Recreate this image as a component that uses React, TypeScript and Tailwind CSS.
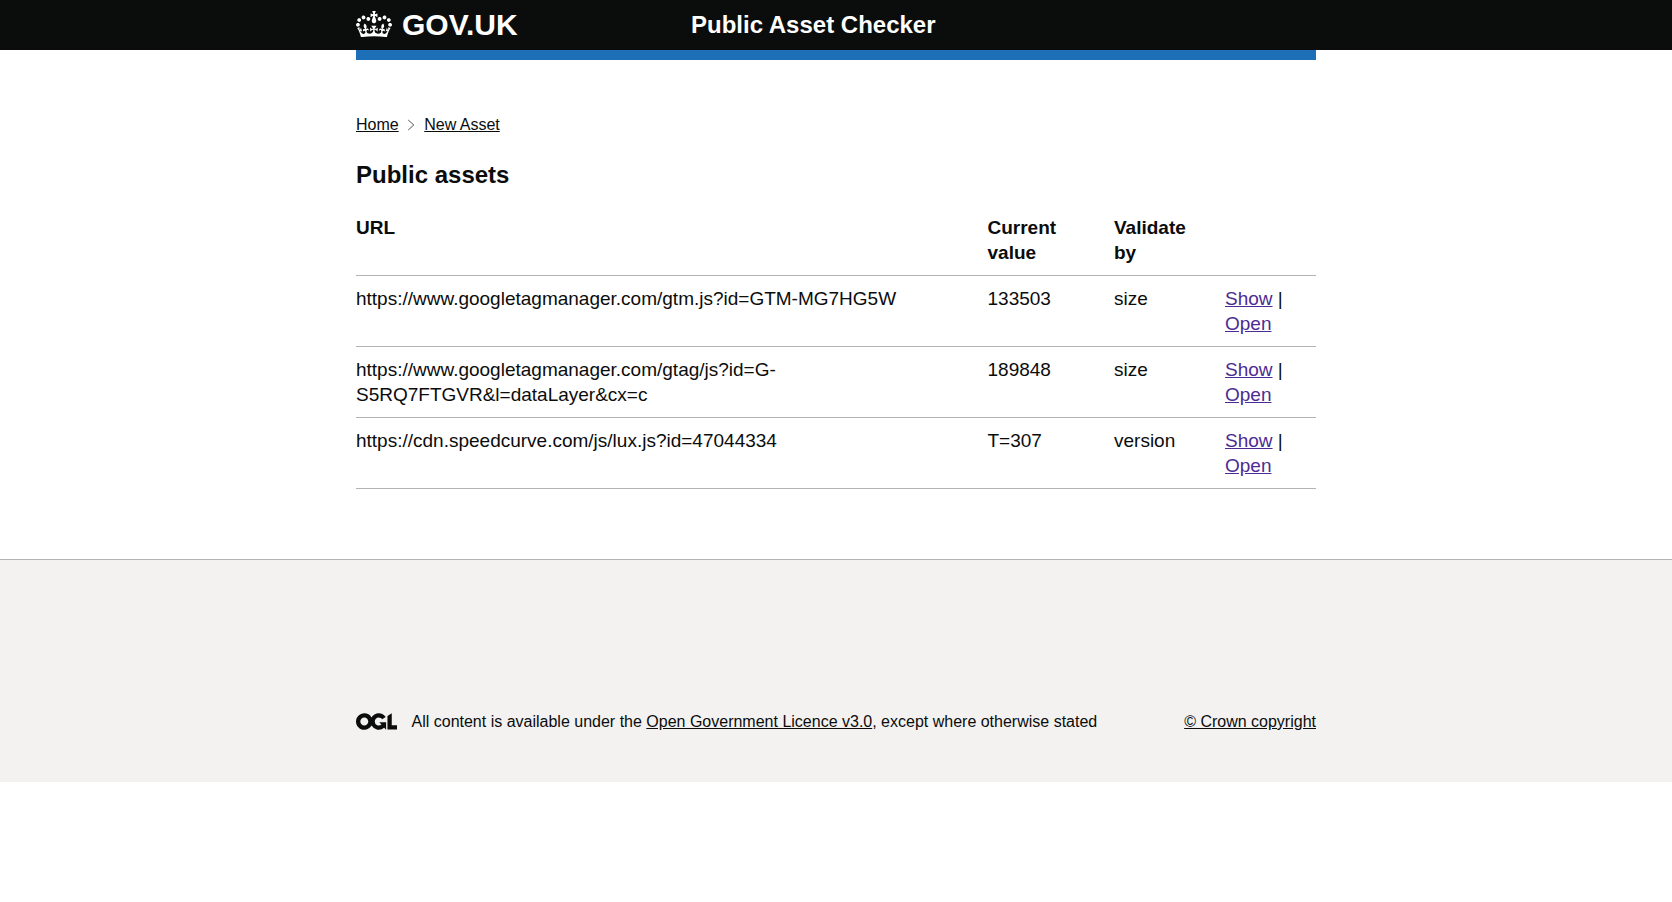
const font = "font-['Liberation_Sans',Arial,sans-serif]";

const rows = [
  { url: "https://www.googletagmanager.com/gtm.js?id=GTM-MG7HG5W", value: "133503", by: "size" },
  { url: "https://www.googletagmanager.com/gtag/js?id=G-S5RQ7FTGVR&l=dataLayer&cx=c", value: "189848", by: "size" },
  { url: "https://cdn.speedcurve.com/js/lux.js?id=47044334", value: "T=307", by: "version" },
];

function Crown() {
  return (
    <svg viewBox="0 0 132 97" className="w-[36px] h-[26.5px] fill-white shrink-0 -mt-[2px]">
      <path d="M25 30.2c3.5 1.5 7.7-.2 9.1-3.7 1.5-3.6-.2-7.8-3.9-9.2-3.6-1.4-7.6.3-9.1 3.9-1.4 3.5.3 7.5 3.9 9zM9 39.5c3.6 1.5 7.8-.2 9.2-3.7 1.5-3.6-.2-7.8-3.9-9.1-3.6-1.5-7.6.2-9.1 3.8-1.4 3.5.3 7.5 3.8 9zM4.4 57.2c3.5 1.5 7.7-.2 9.1-3.8 1.5-3.6-.2-7.7-3.9-9.1-3.6-1.5-7.6.2-9.1 3.8-1.4 3.5.3 7.6 3.9 9.1zm38.3-21.4c3.5 1.5 7.7-.2 9.1-3.8 1.5-3.6-.2-7.7-3.9-9.1-3.6-1.5-7.6.2-9.1 3.8-1.3 3.6.4 7.7 3.9 9.1zm64.4-5.6c-3.6 1.5-7.8-.2-9.1-3.7-1.5-3.6.2-7.8 3.8-9.2 3.6-1.4 7.7.3 9.2 3.9 1.3 3.5-.4 7.5-3.9 9zm15.9 9.3c-3.6 1.5-7.7-.2-9.1-3.7-1.5-3.6.2-7.8 3.7-9.1 3.6-1.5 7.7.2 9.2 3.8 1.5 3.5-.3 7.5-3.8 9zm4.7 17.7c-3.6 1.5-7.8-.2-9.2-3.8-1.5-3.6.2-7.7 3.9-9.1 3.6-1.5 7.7.2 9.2 3.8 1.3 3.5-.4 7.6-3.9 9.1zM89.3 35.8c-3.6 1.5-7.8-.2-9.2-3.8-1.4-3.6.2-7.7 3.9-9.1 3.6-1.5 7.7.2 9.2 3.8 1.4 3.6-.3 7.7-3.9 9.1zM69.7 17.7l8.9 4.7V9.3l-8.9 2.8c-.2-.3-.5-.6-.9-.9L72.4 0H59.6l3.6 11.2c-.3.3-.6.5-.9.9l-8.8-2.8v13.1l8.8-4.7c.3.3.6.7.9.9l-5 15.4v.1c-.2.8-.4 1.6-.4 2.4 0 4.1 3.1 7.5 7 8.1h.2c.3 0 .7.1 1 .1.4 0 .7 0 1-.1h.2c4-.6 7.1-4.1 7.1-8.1 0-.8-.1-1.7-.4-2.4V34l-5.1-15.4c.4-.2.7-.6 1-.9zM66 92.8c16.9 0 32.8 1.1 47.1 3.2 4-16.9 8.9-26.7 14-33.5l-9.6-3.4c1 4.9 1.1 7.2 0 10.2-1.5-1.4-3-4.3-4.2-8.7L108.6 76c2.8-2 5-3.2 7.5-3.3-4.4 9.4-10 11.9-13.6 11.2-4.3-.8-6.3-4.6-5.6-7.9 1-4.7 5.7-5.9 8-.5 4.3-8.7-3-11.4-7.6-8.8 7.1-7.2 7.9-13.5 2.1-21.1-8 6.1-8.1 12.3-4.5 20.8-4.7-5.4-12.1-2.5-9.5 6.2 3.4-5.2 7.9-2 7.2 3.1-.6 4.3-6.4 7.8-13.5 7.2-10.3-.9-10.9-8-11.2-13.8 2.5-.5 7.1 1.8 11 7.3L80.2 60c-4.1 4.4-8 5.3-12.3 5.4 1.4-4.4 8-11.6 8-11.6H55.5s6.4 7.2 7.9 11.6c-4.2-.1-8-1-12.3-5.4l1.4 16.4c3.9-5.5 8.5-7.7 10.9-7.3-.3 5.8-.9 12.8-11.1 13.8-7.2.6-12.9-2.9-13.5-7.2-.7-5 3.8-8.3 7.1-3.1 2.7-8.7-4.6-11.6-9.4-6.2 3.7-8.5 3.6-14.7-4.6-20.8-5.8 7.6-5 13.9 2.2 21.1-4.7-2.6-11.9.1-7.7 8.8 2.3-5.5 7.1-4.2 8.1.5.7 3.3-1.3 7.1-5.7 7.9-3.5.7-9-1.8-13.5-11.2 2.5.1 4.7 1.3 7.5 3.3l-4.7-15.4c-1.2 4.4-2.7 7.2-4.3 8.7-1.1-3-.9-5.3 0-10.2l-9.5 3.4c5 6.9 9.9 16.7 14 33.5 14.8-2.1 30.8-3.2 47.7-3.2z" />
    </svg>
  );
}

function OglLogo() {
  return (
    <svg viewBox="0 0 483.2 195.7" className="w-[41px] h-[17px] fill-[#0b0c0c] shrink-0 -mt-[2px]">
      <path d="M421.5 142.8V.1l-50.7 32.3v161.1h112.4v-50.7zm-122.3-9.6A47.12 47.12 0 0 1 221 97.8c0-26 21.1-47.1 47.1-47.1 16.7 0 31.4 8.7 39.7 21.8l42.7-27.2A97.63 97.63 0 0 0 268.1 0c-36.5 0-68.3 20.1-85.1 49.7A98 98 0 0 0 97.8 0C43.9 0 0 43.9 0 97.8s43.9 97.8 97.8 97.8c36.5 0 68.3-20.1 85.1-49.7a97.76 97.76 0 0 0 149.6 25.4l19.4 22.2h3v-87.8h-80l24.3 27.5zM97.8 145c-26 0-47.1-21.1-47.1-47.1s21.1-47.1 47.1-47.1 47.2 21 47.2 47S123.8 145 97.8 145" />
    </svg>
  );
}

export default function App() {
  return (
    <div className={`${font} text-[#0b0c0c] bg-white min-h-[902px]`}>
      <header className="bg-[#0b0c0c] h-[50px]">
        <div className="w-[960px] mx-auto flex items-center h-full text-white font-bold">
          <div className="w-[335px] flex items-center gap-[10px] text-[30px] leading-none">
            <Crown />
            <span>GOV.UK</span>
          </div>
          <span className="text-[24px] leading-none">Public Asset Checker</span>
        </div>
      </header>
      <div className="w-[960px] mx-auto">
        <div className="h-[10px] bg-[#1d70b8]" />
        <main className="pb-[70px]">
          <nav className="flex items-center pt-[55px] text-[16px] leading-[20px]">
            <a className="underline" href="#">Home</a>
            <svg viewBox="0 0 8 12" className="w-[8px] h-[12px] ml-[8.5px] mr-[9px] fill-none stroke-[#505a5f] stroke-[1px]">
              <path d="M1.2 1 L6.8 6 L1.2 11" />
            </svg>
            <a className="underline" href="#">New Asset</a>
          </nav>
          <h1 className="text-[24px] leading-[30px] font-bold mt-[25px] mb-[15px]">Public assets</h1>
          <table className="w-full table-fixed border-collapse text-[19px] leading-[25px]">
            <colgroup>
              <col className="w-[631.5px]" />
              <col className="w-[126.5px]" />
              <col className="w-[111px]" />
              <col />
            </colgroup>
            <thead>
              <tr className="border-b border-[#b1b4b6] text-left align-top">
                <th className="pt-[10px] pb-[10px] pr-[20px] font-bold">URL</th>
                <th className="pt-[10px] pb-[10px] pr-[20px] font-bold">Current value</th>
                <th className="pt-[10px] pb-[10px] pr-[20px] font-bold">Validate by</th>
                <th />
              </tr>
            </thead>
            <tbody>
              {rows.map((row) => (
                <tr key={row.url} className="border-b border-[#b1b4b6] align-top">
                  <td className="py-[10px] pr-[20px]">{row.url}</td>
                  <td className="py-[10px] pr-[20px]">{row.value}</td>
                  <td className="py-[10px] pr-[20px]">{row.by}</td>
                  <td className="py-[10px]">
                    <a className="underline text-[#4c2c92]" href="#">Show</a> | <a className="underline text-[#4c2c92]" href="#">Open</a>
                  </td>
                </tr>
              ))}
            </tbody>
          </table>
        </main>
      </div>
      <footer className="bg-[#f3f2f1] border-t border-[#b1b4b6] h-[223px] pt-[152px]">
        <div className="w-[960px] mx-auto flex items-center justify-between text-[16px] leading-[20px]">
          <div className="flex items-center gap-[14.5px]">
            <OglLogo />
            <span>
              All content is available under the <a className="underline" href="#">Open Government Licence v3.0</a>, except where otherwise stated
            </span>
          </div>
          <a className="underline" href="#">© Crown copyright</a>
        </div>
      </footer>
    </div>
  );
}
